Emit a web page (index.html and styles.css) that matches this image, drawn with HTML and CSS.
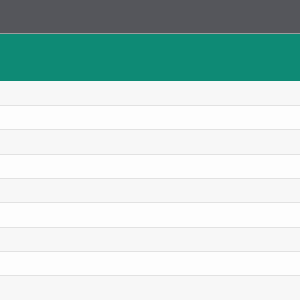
FILE: index.html
```html
<!DOCTYPE html>
<html>
<head>
<meta charset="utf-8">
<link rel="stylesheet" href="styles.css">
</head>
<body>
<div class="app">
  <header class="topbar"></header>
  <div class="banner"></div>
  <ul class="list">
    <li class="row"></li>
    <li class="row"></li>
    <li class="row"></li>
    <li class="row"></li>
    <li class="row"></li>
    <li class="row"></li>
    <li class="row"></li>
    <li class="row"></li>
    <li class="row"></li>
  </ul>
</div>
</body>
</html>
```

FILE: styles.css
```css
html, body {
  margin: 0;
  padding: 0;
  background: #f7f7f7;
  font-family: "Liberation Sans", Arial, sans-serif;
}
.app {
  display: flex;
  flex-direction: column;
  width: 300px;
  height: 300px;
  overflow: hidden;
}
.topbar {
  height: 33.3px;
  flex: none;
  background: #55565b;
  border-bottom: 1.8px solid #9c9c9e;
}
.banner {
  height: 46.5px;
  flex: none;
  background: #0e8a75;
}
.list {
  list-style: none;
  margin: 1px 0 0;
  padding: 0;
  background: #f7f7f7;
}
.row {
  box-sizing: border-box;
  height: 24.33px;
  background: #f7f7f7;
  border-bottom: 1px solid #e2e2e2;
}
.row:nth-child(even) {
  background: #fdfdfd;
}
```
